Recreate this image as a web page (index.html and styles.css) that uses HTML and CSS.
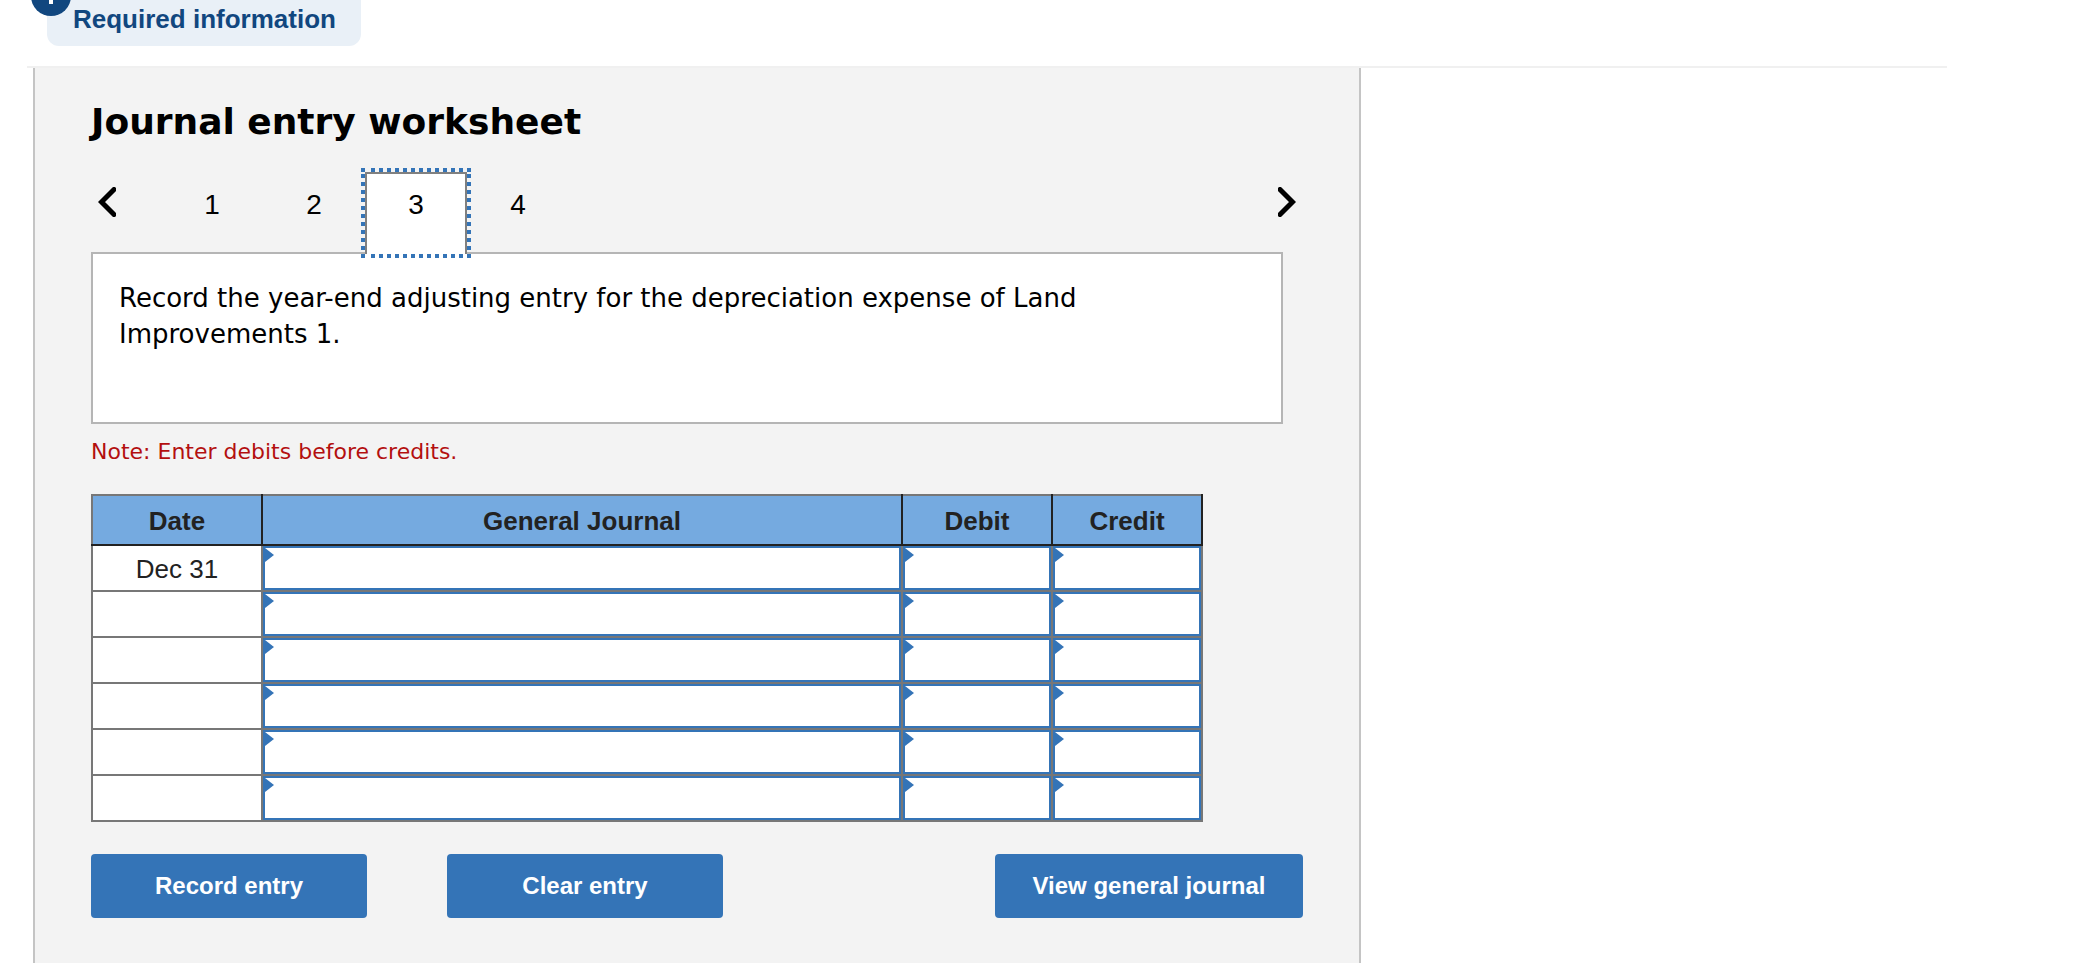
FILE: index.html
```html
<!DOCTYPE html>
<html lang="en">
<head>
    <meta charset="UTF-8">
    <meta name="viewport" content="width=device-width, initial-scale=1.0">
    <title>Journal entry worksheet</title>
    <link rel="stylesheet" href="styles.css">
</head>
<body>
    <header class="info">
        <div class="info-tag">
            <svg class="info-badge" width="40" height="40" viewBox="0 0 40 40" aria-hidden="true">
                <circle cx="20" cy="20" r="20" fill="#11477f"/>
                <path d="M18 8h4v12h-4zM18 24h4v4h-4z" fill="#fff"/>
            </svg>
            Required information
        </div>
    </header>

    <main class="worksheet">
        <h1>Journal entry worksheet</h1>

        <nav class="steps">
            <button type="button" class="arrow" aria-label="Previous">
                <svg width="18" height="30" viewBox="0 0 18 30"><path d="M16 2.5L3.5 15L16 27.5"/></svg>
            </button>
            <button type="button" class="step">1</button>
            <button type="button" class="step">2</button>
            <button type="button" class="step active">3
                <svg class="focus-ring" width="110" height="90" viewBox="0 0 110 90" aria-hidden="true">
                    <path d="M0 2h4M10 2h94M106 2h4M0 88h4M10 88h94M106 88h4M2 6v78M108 6v78"/>
                </svg>
            </button>
            <button type="button" class="step">4</button>
            <button type="button" class="arrow next" aria-label="Next">
                <svg width="18" height="30" viewBox="0 0 18 30"><path d="M2 2.5L14.5 15L2 27.5"/></svg>
            </button>
        </nav>

        <div class="prompt">
            <p>Record the year-end adjusting entry for the depreciation expense of Land Improvements 1.</p>
        </div>
        <p class="note">Note: Enter debits before credits.</p>

        <table class="journal">
            <thead>
                <tr>
                    <th class="date">Date</th>
                    <th>General Journal</th>
                    <th class="amount">Debit</th>
                    <th class="amount">Credit</th>
                </tr>
            </thead>
            <tbody>
                <tr>
                    <td>Dec 31</td>
                    <td class="entry"><input type="text" aria-label="General Journal, row 1"></td>
                    <td class="entry"><input type="text" aria-label="Debit, row 1"></td>
                    <td class="entry"><input type="text" aria-label="Credit, row 1"></td>
                </tr>
                <tr>
                    <td></td>
                    <td class="entry"><input type="text" aria-label="General Journal, row 2"></td>
                    <td class="entry"><input type="text" aria-label="Debit, row 2"></td>
                    <td class="entry"><input type="text" aria-label="Credit, row 2"></td>
                </tr>
                <tr>
                    <td></td>
                    <td class="entry"><input type="text" aria-label="General Journal, row 3"></td>
                    <td class="entry"><input type="text" aria-label="Debit, row 3"></td>
                    <td class="entry"><input type="text" aria-label="Credit, row 3"></td>
                </tr>
                <tr>
                    <td></td>
                    <td class="entry"><input type="text" aria-label="General Journal, row 4"></td>
                    <td class="entry"><input type="text" aria-label="Debit, row 4"></td>
                    <td class="entry"><input type="text" aria-label="Credit, row 4"></td>
                </tr>
                <tr>
                    <td></td>
                    <td class="entry"><input type="text" aria-label="General Journal, row 5"></td>
                    <td class="entry"><input type="text" aria-label="Debit, row 5"></td>
                    <td class="entry"><input type="text" aria-label="Credit, row 5"></td>
                </tr>
                <tr>
                    <td></td>
                    <td class="entry"><input type="text" aria-label="General Journal, row 6"></td>
                    <td class="entry"><input type="text" aria-label="Debit, row 6"></td>
                    <td class="entry"><input type="text" aria-label="Credit, row 6"></td>
                </tr>
            </tbody>
        </table>

        <div class="actions">
            <button type="button" class="btn">Record entry</button>
            <button type="button" class="btn">Clear entry</button>
            <button type="button" class="btn view">View general journal</button>
        </div>
    </main>
</body>
</html>
```

FILE: styles.css
```css
* {
    box-sizing: border-box;
}
body {
    display: flex;
    flex-direction: column;
    min-height: 100vh;
    margin: 0;
    background-color: white;
    color: black;
    font-family: "Liberation Sans", Arial, sans-serif;
}
button {
    border: 0;
    padding: 0;
    background: none;
    color: inherit;
    font-family: inherit;
    cursor: pointer;
}

/* Required information tag */
.info {
    display: flex;
    max-width: 1920px;
    margin-left: 27px;
    padding: 0 20px 20px;
    border-bottom: 2px solid #f0f0f0;
}
.info-tag {
    position: relative;
    padding: 4px 25px 12px 26px;
    border-radius: 0 0 12px 12px;
    background-color: #e9f0f7;
    color: #11477f;
    font-size: 26px;
    font-weight: bold;
    line-height: 30px;
}
.info-badge {
    position: absolute;
    top: -24px;
    left: -16px;
}

/* Worksheet panel */
.worksheet {
    flex: 1;
    max-width: 1328px;
    margin-left: 33px;
    padding: 32px 56px 40px;
    border: solid #c4c4c4;
    border-width: 0 2px;
    background-color: #f3f3f3;
}
h1 {
    margin: 0 0 28px;
    font-family: Verdana, "DejaVu Sans", sans-serif;
    font-size: 36px;
    line-height: 44px;
}

/* Step tabs */
.steps {
    display: flex;
    position: relative;
    margin-bottom: -2px;
}
.arrow {
    width: 70px;
    padding: 0 7px 22px;
    text-align: left;
}
.arrow svg {
    display: block;
    fill: none;
    stroke: black;
    stroke-width: 5;
    stroke-linecap: round;
}
.next {
    margin-left: auto;
}
.next svg {
    margin-left: auto;
}
.step {
    position: relative;
    width: 102px;
    padding: 15px 0 33px;
    border: solid transparent;
    border-width: 2px 2px 0;
    font-size: 28px;
    line-height: 32px;
}
.active {
    border-color: #808080;
    background-color: white;
}
.focus-ring {
    position: absolute;
    top: -6px;
    left: -6px;
    fill: none;
    stroke: #3474b7;
    stroke-width: 4;
    stroke-dasharray: 4 4;
}

.prompt {
    min-height: 172px;
    margin-right: 20px;
    padding: 26px;
    border: 2px solid #b5b5b5;
    background-color: white;
}
.prompt p {
    margin: 0;
    font-family: Verdana, "DejaVu Sans", sans-serif;
    font-size: 26px;
    line-height: 36px;
}
.note {
    margin: 12px 0 26px;
    color: #b30f0f;
    font-family: Verdana, "DejaVu Sans", sans-serif;
    font-size: 22px;
    line-height: 32px;
}

/* Journal table */
.journal {
    width: 100%;
    max-width: 1112px;
    border-collapse: collapse;
    table-layout: fixed;
    border: 2px solid #777;
    color: #222;
    font-size: 26px;
    line-height: 30px;
}
.journal th {
    height: 50px;
    padding: 2px 0 0;
    border: solid #222;
    border-width: 0 2px 2px;
    background-color: #75aae0;
}
.journal th:first-child {
    border-left-color: #777;
}
.date {
    width: 170px;
}
.amount {
    width: 150px;
}
.journal td {
    height: 46px;
    padding: 2px 0 0;
    border: 2px solid #777;
    background-color: white;
    text-align: center;
}
.journal thead + tbody tr:first-child td {
    border-top-color: #222;
}
.journal .entry {
    position: relative;
    padding: 0;
}
.entry input {
    display: block;
    width: 100%;
    height: 44px;
    padding: 0 12px;
    border: 2px solid #3474b7;
    border-radius: 0;
    font: inherit;
}
/* marker in the corner of an editable cell */
.entry::after {
    content: "";
    position: absolute;
    top: 2px;
    left: 2px;
    border: solid transparent;
    border-width: 7px 0 7px 9px;
    border-left-color: #3474b7;
}

/* Buttons */
.actions {
    display: flex;
    gap: 80px;
    margin-top: 32px;
}
.btn {
    width: 276px;
    height: 64px;
    border-radius: 4px;
    background-color: #3474b7;
    color: white;
    font-size: 24px;
    font-weight: bold;
}
.view {
    width: 308px;
    margin-left: auto;
}
```
